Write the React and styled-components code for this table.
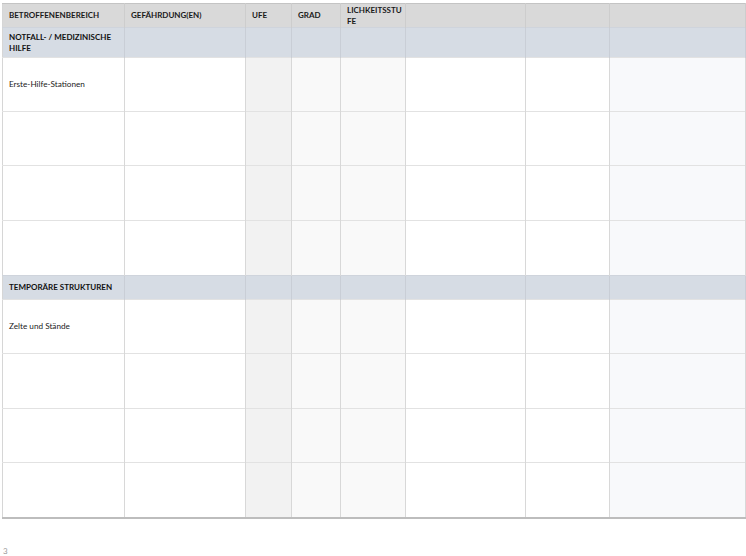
import React from 'react';
import styled, { createGlobalStyle } from 'styled-components';

const GlobalStyle = createGlobalStyle`
  html, body {
    margin: 0;
    padding: 0;
    background: #ffffff;
    font-family: Lato, "Open Sans", "Liberation Sans", sans-serif;
  }
`;

const Page = styled.div`
  width: 746px;
  height: 556px;
  box-sizing: border-box;
  padding: 3px 1px 0 2px;
  display: flex;
  flex-direction: column;
`;

const Table = styled.table`
  width: 743px;
  table-layout: fixed;
  border-collapse: collapse;
  border-top: 1px solid #c4c4c4;
  border-bottom: 2px solid #bdbdbd;
  border-left: 1px solid #d6d6d6;
  border-right: 1px solid #d6d6d6;
`;

const HeadCell = styled.th`
  height: 24px;
  box-sizing: border-box;
  padding: 0 2px 0 6px;
  background: #d9d9d9;
  border-right: 1px solid #cdcdcd;
  color: #1a1a1a;
  font-size: 8px;
  font-weight: 700;
  line-height: 11px;
  text-align: left;
  vertical-align: middle;
  text-transform: uppercase;
  word-break: break-all;
`;

const SectionCell = styled.td`
  height: ${p => p.$h}px;
  box-sizing: border-box;
  padding: 0 6px;
  background: #d6dce4;
  border-right: 1px solid #c9ced6;
  border-top: 1px solid #cfd4dc;
  color: #111111;
  font-size: 8px;
  font-weight: 700;
  line-height: 11px;
  text-transform: uppercase;
  vertical-align: middle;
`;

const tints = ['#ffffff', '#ffffff', '#f2f2f2', '#f9f9f9', '#f9f9f9', '#ffffff', '#ffffff', '#f8f9fb'];

const DataCell = styled.td`
  height: ${p => p.$h}px;
  box-sizing: border-box;
  padding: 0 6px;
  background: ${p => tints[p.$col]};
  border-right: 1px solid #d8d8d8;
  border-top: 1px solid #e2e2e2;
  color: #222222;
  font-size: 8.2px;
  line-height: 11px;
  vertical-align: middle;
`;

const PageNumber = styled.div`
  margin-top: 27px;
  padding-left: 1px;
  color: #9a9a9a;
  font-size: 8px;
  line-height: 10px;
`;

const widths = [122, 121, 46, 49, 65, 120, 84, 136];
const headers = ['Betroffenenbereich', 'Gefährdung(en)', 'UFE', 'Grad', 'Lichkeitsstufe', '', '', ''];

const sections = [
  { title: 'Notfall- / Medizinische Hilfe', height: 30, first: 'Erste-Hilfe-Stationen', rows: [54, 54, 55, 55] },
  { title: 'Temporäre Strukturen', height: 24, first: 'Zelte und Stände', rows: [54, 55, 54, 55] },
];

const DataRow = ({ label, height }) => (
  <tr>
    {widths.map((_, i) => (
      <DataCell key={i} $col={i} $h={height}>{i === 0 ? label : null}</DataCell>
    ))}
  </tr>
);

const App = () => (
  <>
    <GlobalStyle />
    <Page>
      <Table>
        <colgroup>
          {widths.map((w, i) => <col key={i} style={{ width: w }} />)}
        </colgroup>
        <thead>
          <tr>
            {headers.map((h, i) => <HeadCell key={i}>{h}</HeadCell>)}
          </tr>
        </thead>
        <tbody>
          {sections.map(s => (
            <React.Fragment key={s.title}>
              <tr>
                {widths.map((_, i) => (
                  <SectionCell key={i} $h={s.height}>{i === 0 ? s.title : null}</SectionCell>
                ))}
              </tr>
              {s.rows.map((h, r) => (
                <DataRow key={r} height={h} label={r === 0 ? s.first : ''} />
              ))}
            </React.Fragment>
          ))}
        </tbody>
      </Table>
      <PageNumber>3</PageNumber>
    </Page>
  </>
);

export default App;
